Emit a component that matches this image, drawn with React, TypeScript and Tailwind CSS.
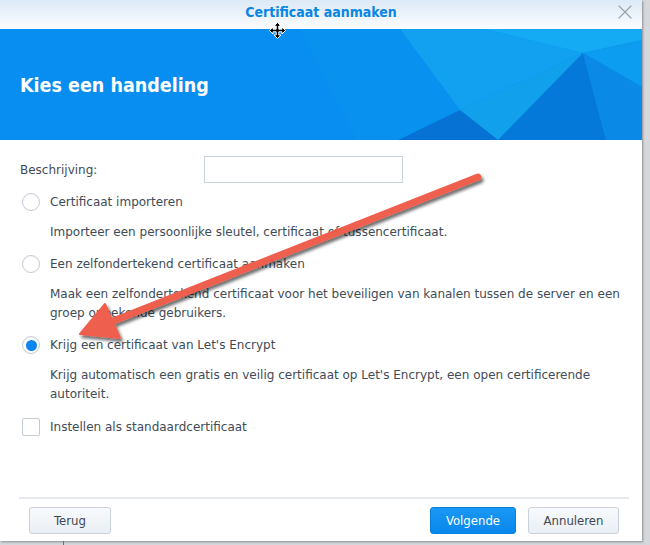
import { X } from "lucide-react"

const body = "font-['DejaVu_Sans',sans-serif]"
const cond = "font-['DejaVu_Sans_Condensed','DejaVu_Sans',sans-serif]"

const Radio = ({ checked = false }: { checked?: boolean }) => (
    <span className="w-[18px] h-[18px] rounded-full border border-[#c3ccd6] bg-white flex items-center justify-center shrink-0 shadow-[inset_0_1px_1px_rgba(0,0,0,0.04)]">
        {checked && <span className="w-[11px] h-[11px] rounded-full bg-[#0b84f4]" />}
    </span>
)

const Option = ({ label, desc, checked }: { label: string; desc: string[]; checked?: boolean }) => (
    <div className="flex flex-col">
        <div className="flex items-center h-5 pl-[2px] gap-[10px]">
            <Radio checked={checked} />
            <span>{label}</span>
        </div>
        <div className="pl-[30px] mt-[11px] leading-[19px]">
            {desc.map((d) => (
                <div key={d}>{d}</div>
            ))}
        </div>
    </div>
)

const HeaderArt = () => (
    <svg className="absolute inset-0 w-full h-full" viewBox="0 0 642 111" preserveAspectRatio="none">
        <polygon points="299,0 357,111 0,111 0,0" fill="#078ef0" />
        <polygon points="400,0 485,0 583,24 460,81" fill="#14a3f1" opacity="0.9" />
        <polygon points="485,0 642,0 642,11 583,24" fill="#15aaf4" />
        <polygon points="583,24 642,11 642,58" fill="#0c9cf0" />
        <polygon points="460,81 583,24 498,111" fill="#10a0ec" />
        <polygon points="460,81 398,111 498,111" fill="#0673d4" />
        <polygon points="583,24 498,111 606,111" fill="#0579da" />
        <polygon points="583,24 642,58 642,111 606,111" fill="#0a89e6" />
        <polygon points="299,0 400,0 460,81 398,111 357,111" fill="#0b93ee" opacity="0.6" />
    </svg>
)

const Arrow = () => (
    <svg className="absolute inset-0 pointer-events-none" width="650" height="545">
        <defs>
            <filter id="sh" x="-10%" y="-10%" width="130%" height="130%">
                <feDropShadow dx="2" dy="3" stdDeviation="1.8" floodColor="#000" floodOpacity="0.55" />
            </filter>
        </defs>
        <g filter="url(#sh)" fill="#ee5f4e" stroke="#ee5f4e">
            <line x1="478" y1="177" x2="108" y2="323" strokeWidth="7" strokeLinecap="round" />
            <polygon points="80,334 105,304 120,338" strokeWidth="2" strokeLinejoin="round" />
        </g>
    </svg>
)

const MoveCursor = () => (
    <svg className="absolute left-[269px] top-[22px]" width="17" height="17" viewBox="0 0 17 17">
        <path
            d="M8.5 0.5 L12 4 H9.8 V7.2 H13 V5 L16.5 8.5 L13 12 V9.8 H9.8 V13 H12 L8.5 16.5 L5 13 H7.2 V9.8 H4 V12 L0.5 8.5 L4 5 V7.2 H7.2 V4 H5 Z"
            fill="#000"
            stroke="#fff"
            strokeWidth="1"
            strokeLinejoin="round"
        />
    </svg>
)

const Button = ({ children, primary = false, w }: { children: string; primary?: boolean; w: string }) => (
    <button
        className={
            primary
                ? `${w} h-[27px] rounded-[3px] border border-[#0a7fdc] bg-gradient-to-b from-[#1a98f4] to-[#0887ec] text-white text-[13px] ${cond}`
                : `${w} h-[27px] rounded-[3px] border border-[#c9d1da] bg-gradient-to-b from-[#f8fafc] to-[#eaeff4] text-[#3d4752] text-[13px] ${cond}`
        }
    >
        {children}
    </button>
)

export default function App() {
    return (
        <div className="relative w-[650px] h-[545px] bg-[#d4d7db] overflow-hidden">
            <div className="w-[642px] h-[541px] bg-white flex flex-col shadow-[1px_1px_2px_rgba(0,0,0,0.35)]">
                <div className="h-[29px] shrink-0 relative flex items-center justify-center pb-[4px] bg-gradient-to-b from-[#dce9f6] to-[#fbfdff]">
                    <span className={`text-[14px] font-bold text-[#0a86e2] ${cond}`}>Certificaat aanmaken</span>
                    <X className="absolute right-[5px] top-0 text-[#9aa0a6]" size={24} strokeWidth={1.2} />
                </div>
                <div className="h-[111px] shrink-0 relative bg-[#078ef0] flex items-center px-5 overflow-hidden">
                    <HeaderArt />
                    <span className={`relative text-white text-[19.5px] font-bold pt-[2px] ${cond}`}>Kies een handeling</span>
                </div>
                <div className={`flex flex-col pl-5 pt-4 text-[12px] text-[#414b57] ${body}`}>
                    <div className="flex items-center h-[27px]">
                        <span className="w-[184px] pt-px">Beschrijving:</span>
                        <div className="w-[199px] h-[27px] border border-[#c8d2de] bg-white" />
                    </div>
                    <div className="mt-[9px] flex flex-col gap-[12px]">
                        <Option label="Certificaat importeren" desc={["Importeer een persoonlijke sleutel, certificaat of tussencertificaat."]} />
                        <Option
                            label="Een zelfondertekend certificaat aanmaken"
                            desc={["Maak een zelfondertekend certificaat voor het beveiligen van kanalen tussen de server en een", "groep onbekende gebruikers."]}
                        />
                        <Option
                            checked
                            label="Krijg een certificaat van Let's Encrypt"
                            desc={["Krijg automatisch een gratis en veilig certificaat op Let's Encrypt, een open certificerende", "autoriteit."]}
                        />
                        <div className="flex items-center h-5 pl-[2px] gap-[10px] mt-px">
                            <span className="w-[18px] h-[18px] rounded-[2px] border border-[#c3ccd6] bg-white shrink-0" />
                            <span>Instellen als standaardcertificaat</span>
                        </div>
                    </div>
                </div>
                <div className="mt-auto ml-[19px] mr-[13px] border-t-2 border-[#e6e9ed]" />
                <div className="flex items-center pl-[29px] pr-[23px] pt-[8px] pb-[7px]">
                    <Button w="w-[82px]">Terug</Button>
                    <div className="ml-auto flex gap-3">
                        <Button primary w="w-[86px]">Volgende</Button>
                        <Button w="w-[91px]">Annuleren</Button>
                    </div>
                </div>
            </div>
            <div className="absolute left-[63px] top-[541px] w-px h-1 bg-[#6b6f74]" />
            <MoveCursor />
            <Arrow />
        </div>
    )
}
